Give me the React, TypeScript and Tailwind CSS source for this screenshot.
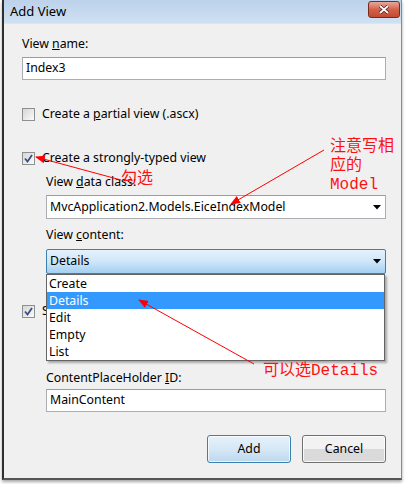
import React from "react";

function CheckBox({ checked }: { checked?: boolean }) {
  return (
    <span className="w-[13px] h-[13px] shrink-0 border border-[#8e8f8f] bg-gradient-to-br from-[#d6d6d6] to-[#fbfbfb] flex items-center justify-center">
      {checked && (
        <svg width="9" height="9" viewBox="0 0 9 9">
          <path d="M1 4.5 L3.5 7.5 L8 1" stroke="#3b4d86" strokeWidth="1.8" fill="none" />
        </svg>
      )}
    </span>
  );
}

function DownArrow() {
  return (
    <svg width="8" height="5" viewBox="0 0 8 5" className="shrink-0">
      <path d="M0 0 H8 L4 4.5 Z" fill="#000" />
    </svg>
  );
}

const items = ["Create", "Details", "Edit", "Empty", "List"];

export default function App() {
  return (
    <div className="relative w-[406px] h-[484px] bg-white text-[12.3px] text-black font-['Segoe_UI','Noto_Sans',sans-serif] overflow-hidden">
      <div className="ml-[2px] w-[400px] h-[480px] flex flex-col bg-[#f0f0f0] border-l-2 border-[#2f2f2f] border-r border-r-[#8a8a8a] border-b-2 border-b-[#555] shadow-[0_2px_3px_rgba(0,0,0,0.35)]">
        {/* title bar */}
        <div className="h-[24px] shrink-0 flex items-center justify-between pl-[6px] pr-[1px] bg-gradient-to-b from-[#bcd2ea] to-[#cfe0f2] border-b border-[#d9e6f4]">
          <span className="text-[13px] leading-none">Add View</span>
          <div className="w-[32px] h-[17px] mb-[4px] rounded-[3px] border border-[#7a2a1d] bg-gradient-to-b from-[#e8a899] via-[#d2614b] to-[#c44a2f] flex items-center justify-center">
            <svg width="12" height="9" viewBox="0 0 12 9">
              <path d="M2 1 L10 8 M10 1 L2 8" stroke="#4a1a12" strokeWidth="3.2" />
              <path d="M2 1 L10 8 M10 1 L2 8" stroke="#fff" strokeWidth="1.8" />
            </svg>
          </div>
        </div>

        {/* body */}
        <div className="flex flex-col pl-[18px] pr-[15px]">
          <div className="mt-[12px] h-[16px] leading-[16px]">
            View <span className="underline">n</span>ame:
          </div>
          <div className="mt-[5px] h-[23px] bg-white border border-[#abadb3] border-t-[#9a9ca2] flex items-center pl-[3px]">
            Index3
          </div>

          <div className="mt-[26px] h-[16px] flex items-center gap-[7px]">
            <CheckBox />
            <span>
              Create a <span className="underline">p</span>artial view (.ascx)
            </span>
          </div>

          <div className="mt-[28px] h-[16px] flex items-center gap-[7px]">
            <CheckBox checked />
            <span>Create a strongly-typed view</span>
          </div>

          <div className="pl-[24px] flex flex-col">
            <div className="mt-[8px] h-[16px] leading-[16px]">
              View <span className="underline">d</span>ata class:
            </div>
            <div className="mt-[5px] h-[24px] bg-white border border-[#abadb3] border-t-[#9a9ca2] flex items-center justify-between pl-[3px] pr-[4px]">
              <span>MvcApplication2.Models.EiceIndexModel</span>
              <DownArrow />
            </div>

            <div className="mt-[8px] h-[16px] leading-[16px]">
              View <span className="underline">c</span>ontent:
            </div>
            <div className="relative mt-[6px]">
              <div className="h-[25px] rounded-[2px] border border-[#3c7fb1] bg-gradient-to-b from-[#e6f2fc] via-[#cfe6f8] to-[#a3d0f1] flex items-center justify-between pl-[3px] pr-[4px]">
                <span>Details</span>
                <DownArrow />
              </div>
              {/* open dropdown list */}
              <div className="absolute z-10 left-0 top-full w-[339px] bg-white border border-[#646464] shadow-[2px_2px_2px_rgba(0,0,0,0.3)] flex flex-col">
                {items.map((it) => (
                  <div
                    key={it}
                    className={
                      it === "Details"
                        ? "h-[17px] leading-[17px] pl-[2px] bg-[#3399ff] text-white"
                        : "h-[17px] leading-[17px] pl-[2px]"
                    }
                  >
                    {it}
                  </div>
                ))}
              </div>
            </div>
          </div>

          <div className="mt-[29px] h-[16px] flex items-center gap-[7px]">
            <CheckBox checked />
            <span>Select master page</span>
          </div>

          <div className="pl-[24px] flex flex-col">
            <div className="mt-[51px] h-[16px] leading-[16px]">
              ContentPlaceHolder <span className="underline">I</span>D:
            </div>
            <div className="mt-[3px] h-[23px] bg-white border border-[#abadb3] border-t-[#9a9ca2] flex items-center pl-[3px]">
              MainContent
            </div>
          </div>

          <div className="mt-[23px] flex justify-end gap-[11px]">
            <button className="w-[84px] h-[28px] rounded-[3px] border border-[#3c7fb1] bg-gradient-to-b from-[#e6f2fb] via-[#d6e8f6] to-[#bcd8ee] shadow-[inset_0_0_0_1px_rgba(255,255,255,0.7)]">
              Add
            </button>
            <button className="w-[84px] h-[28px] rounded-[3px] border border-[#707070] bg-gradient-to-b from-[#f2f2f2] from-50% to-[#dadada] to-50% shadow-[inset_0_0_0_1px_rgba(255,255,255,0.8)]">
              Cancel
            </button>
          </div>
        </div>
      </div>

      {/* red annotations */}
      <svg className="absolute z-20 left-0 top-0 pointer-events-none" width="406" height="484">
        <defs>
          <marker id="ah" markerWidth="10" markerHeight="8" refX="9" refY="4" orient="auto" markerUnits="userSpaceOnUse">
            <path d="M0 0 L10 4 L0 8 Z" fill="#ff0000" />
          </marker>
        </defs>
        <line x1="121" y1="180" x2="36" y2="157" stroke="#ff0000" strokeWidth="1" markerEnd="url(#ah)" />
        <line x1="324" y1="150" x2="231" y2="204" stroke="#ff0000" strokeWidth="1" markerEnd="url(#ah)" />
        <line x1="254" y1="364" x2="139" y2="300" stroke="#ff0000" strokeWidth="1" markerEnd="url(#ah)" />
      </svg>
      <div className="absolute z-20 left-[121px] top-[170px] text-[16px] leading-[19px] text-[#ff1010] font-['Liberation_Mono','Noto_Sans_CJK_SC',monospace]">
        勾选
      </div>
      <div className="absolute z-20 left-[330px] top-[138px] text-[16px] leading-[19px] text-[#ff1010] font-['Liberation_Mono','Noto_Sans_CJK_SC',monospace]">
        注意写相
        <br />
        应的
        <br />
        Model
      </div>
      <div className="absolute z-20 left-[263px] top-[362px] text-[16px] leading-[19px] text-[#ff1010] font-['Liberation_Mono','Noto_Sans_CJK_SC',monospace]">
        可以选Details
      </div>
    </div>
  );
}
